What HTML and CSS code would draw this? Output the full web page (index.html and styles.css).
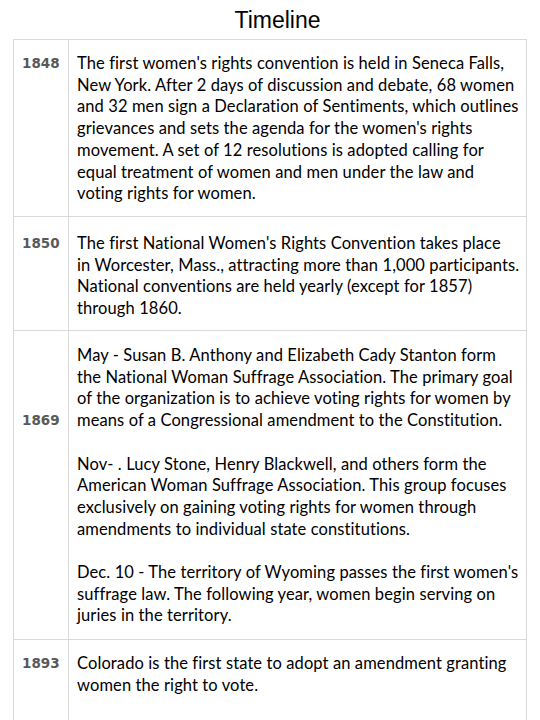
FILE: index.html
```html
<!DOCTYPE html>
<html>
<head>
<meta charset="utf-8">
<link rel="stylesheet" href="styles.css">
</head>
<body>
<h1 class="title">Timeline</h1>
<div class="timeline">
  <div class="row row-a">
    <div class="year">1848</div>
    <div class="text">
      <p>The first women's rights convention is held in Seneca Falls,<br>New York. After 2 days of discussion and debate, 68 women<br>and 32 men sign a Declaration of Sentiments, which outlines<br>grievances and sets the agenda for the women's rights<br>movement. A set of 12 resolutions is adopted calling for<br>equal treatment of women and men under the law and<br>voting rights for women.</p>
    </div>
  </div>
  <div class="row row-b">
    <div class="year">1850</div>
    <div class="text">
      <p>The first National Women's Rights Convention takes place<br>in Worcester, Mass., attracting more than 1,000 participants.<br>National conventions are held yearly (except for 1857)<br>through 1860.</p>
    </div>
  </div>
  <div class="row row-c">
    <div class="year year-low">1869</div>
    <div class="text">
      <p>May - Susan B. Anthony and Elizabeth Cady Stanton form<br>the National Woman Suffrage Association. The primary goal<br>of the organization is to achieve voting rights for women by<br>means of a Congressional amendment to the Constitution.</p>
      <p>Nov- . Lucy Stone, Henry Blackwell, and others form the<br>American Woman Suffrage Association. This group focuses<br>exclusively on gaining voting rights for women through<br>amendments to individual state constitutions.</p>
      <p>Dec. 10 - The territory of Wyoming passes the first women's<br>suffrage law. The following year, women begin serving on<br>juries in the territory.</p>
    </div>
  </div>
  <div class="row row-d">
    <div class="year">1893</div>
    <div class="text">
      <p>Colorado is the first state to adopt an amendment granting<br>women the right to vote.</p>
    </div>
  </div>
</div>
</body>
</html>
```
FILE: styles.css
```css
html, body {
  margin: 0;
  padding: 0;
  background: #ffffff;
}
body {
  width: 540px;
  height: 720px;
  overflow: hidden;
}
.title {
  margin: 0;
  height: 39px;
  padding-left: 15px;
  box-sizing: border-box;
  text-align: center;
  font-family: "Liberation Sans", Arial, sans-serif;
  font-weight: normal;
  font-size: 23px;
  line-height: 40px;
  color: #000;
}
.timeline {
  margin-left: 13px;
  width: 514px;
  border: 1px solid #d9d9d9;
  border-bottom: none;
  box-sizing: border-box;
}
.row {
  display: grid;
  grid-template-columns: 55px 1fr;
  border-bottom: 1px solid #d9d9d9;
}
.row:last-child {
  border-bottom: none;
}
.year {
  border-right: 1px solid #d9d9d9;
  padding-left: 8px;
  font-family: "DejaVu Sans", sans-serif;
  font-weight: bold;
  font-size: 13.5px;
  line-height: 21.7px;
  color: #595959;
}
.text {
  padding-left: 8px;
  font-family: Lato, "Open Sans", sans-serif;
  font-size: 16.5px;
  letter-spacing: 0.1px;
  line-height: 21.7px;
  color: #000;
  white-space: nowrap;
}
.text p {
  margin: 0;
}
.text p + p {
  margin-top: 21.7px;
}
.row-a { height: 176px; }
.row-a .year, .row-a .text { padding-top: 13px; }
.row-b { height: 113px; }
.row-b .year, .row-b .text { padding-top: 16px; }
.row-c { height: 308px; }
.row-c .text { padding-top: 14px; }
.row-c .year { padding-top: 79px; }
.row-d { height: 82px; }
.row-d .year, .row-d .text { padding-top: 13px; }
```
